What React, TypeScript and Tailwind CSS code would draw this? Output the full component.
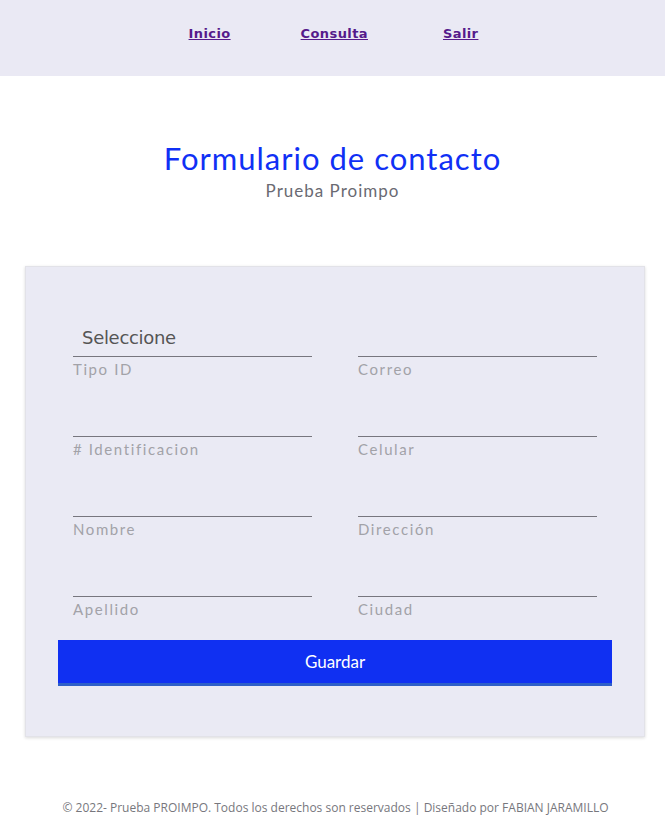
import React, { useState } from "react";

const fields = [
  { left: "Tipo ID", right: "Correo" },
  { left: "# Identificacion", right: "Celular" },
  { left: "Nombre", right: "Dirección" },
  { left: "Apellido", right: "Ciudad" },
];

const Field: React.FC<{ label: string; select?: boolean }> = ({ label, select }) => {
  const [value, setValue] = useState("");
  return (
    <div className="flex flex-col">
      {select ? (
        <select
          value={value}
          onChange={(e) => setValue(e.target.value)}
          className="h-[40px] appearance-none border-b border-[#77767e] bg-transparent pl-[9px] pt-[2px] text-[18px] text-[#555] outline-none font-['DejaVu_Sans',sans-serif] tracking-[-0.3px]"
        >
          <option value="">Seleccione</option>
          <option value="cc">Cédula</option>
          <option value="ti">Tarjeta de identidad</option>
        </select>
      ) : (
        <input
          value={value}
          onChange={(e) => setValue(e.target.value)}
          className="h-[40px] border-b border-[#77767e] bg-transparent px-2 text-[16px] text-[#555] outline-none"
        />
      )}
      <label className="h-[40px] pt-[1px] pb-[1px] text-[15px] leading-[22px] tracking-[1.6px] text-[#a2a2a8] font-['Lato',sans-serif]">
        {label}
      </label>
    </div>
  );
};

const App: React.FC = () => {
  return (
    <div className="min-h-[816px] bg-white font-['Lato',sans-serif]">
      {/* Nav */}
      <nav className="flex h-[76px] items-start justify-center bg-[#eae9f4] pt-[24px] pl-[2px]">
        <a href="#" className="text-[13px] font-bold text-[#551a8b] underline tracking-[0.4px] font-['DejaVu_Sans',sans-serif]">
          Inicio
        </a>
        <a href="#" className="ml-[70px] text-[13px] font-bold text-[#551a8b] underline tracking-[0.4px] font-['DejaVu_Sans',sans-serif]">
          Consulta
        </a>
        <a href="#" className="ml-[75px] text-[13px] font-bold text-[#551a8b] underline tracking-[0.4px] font-['DejaVu_Sans',sans-serif]">
          Salir
        </a>
      </nav>

      {/* Header */}
      <div className="flex flex-col items-center pt-[64px]">
        <h1 className="text-[31px] leading-[36px] text-[#1030f5] tracking-[1px]">Formulario de contacto</h1>
        <p className="mt-[4px] text-[17px] leading-[22px] text-[#6a6a72] tracking-[1px]">Prueba Proimpo</p>
      </div>

      {/* Form card */}
      <div className="ml-[25px] mr-[20px] mt-[64px] border border-[#e2e2e8] bg-[#eaeaf4] px-[32px] pt-[50px] pb-[50px] shadow-[0_1px_3px_rgba(0,0,0,0.15)]">
        <div className="grid grid-cols-2 gap-x-[46px] px-[15px]">
          {fields.map((row, i) => (
            <React.Fragment key={row.left}>
              <Field label={row.left} select={i === 0} />
              <Field label={row.right} />
            </React.Fragment>
          ))}
        </div>
        <button className="mt-[3px] h-[46px] w-full border-b-[3px] border-[#2e5fc8] bg-[#1030f2] text-[17px] text-white">
          Guardar
        </button>
      </div>

      {/* Footer */}
      <footer className="pt-[62px] pl-[6px] text-center text-[12px] text-[#77777d] font-['Open_Sans',sans-serif]">
        © 2022- Prueba PROIMPO. Todos los derechos son reservados | Diseñado por FABIAN JARAMILLO
      </footer>
    </div>
  );
};

export default App;
